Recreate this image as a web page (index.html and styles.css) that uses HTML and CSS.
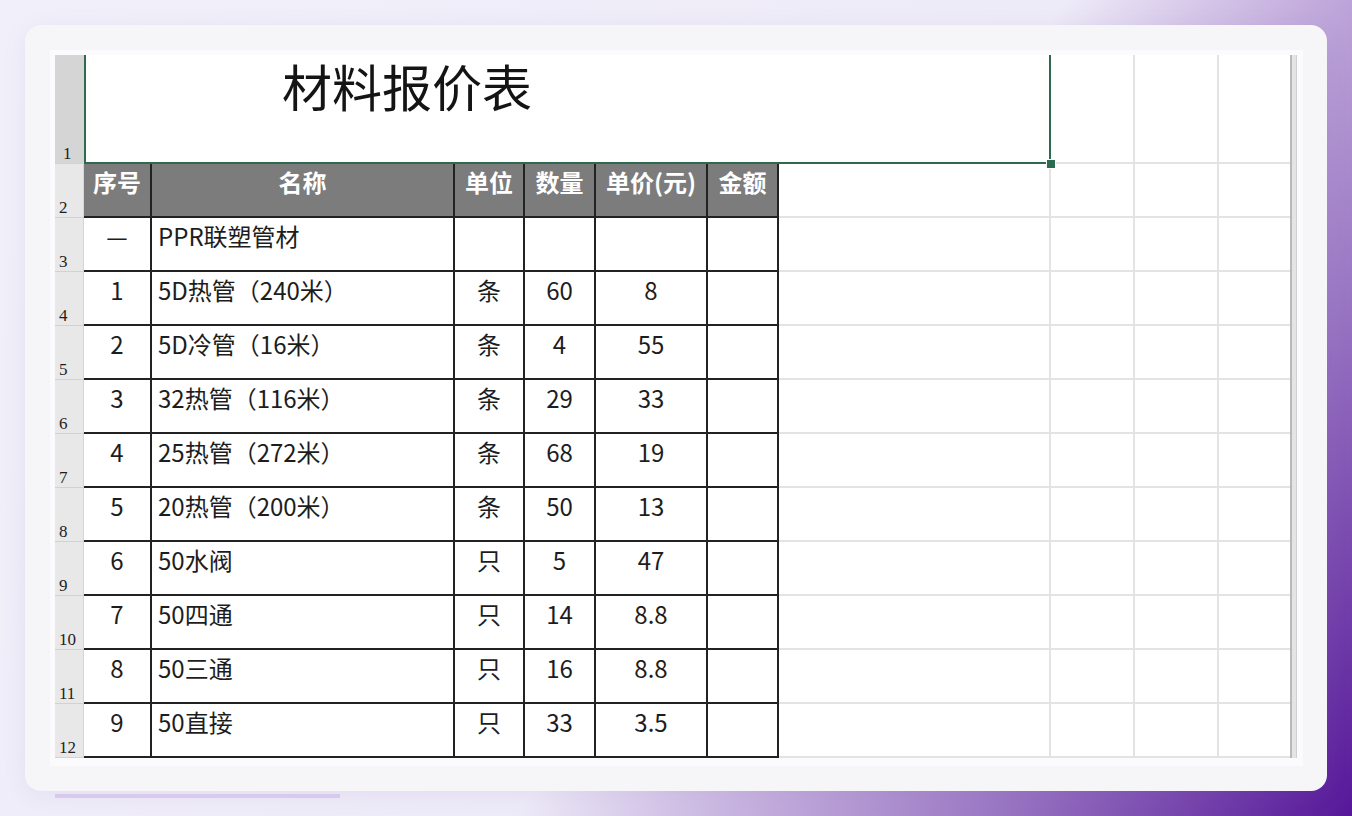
FILE: index.html
```html
<!DOCTYPE html>
<html lang="zh-CN">
<head>
<meta charset="utf-8">
<title>材料报价表</title>
<link rel="stylesheet" href="styles.css">
</head>
<body>
<div class="card">
  <div class="frame">
    <div class="sheet">
      <div class="rh rh-sel">1</div>
      <div class="title">材料报价表<span class="handle"></span></div>
      <div class="lc"></div><div class="lc"></div><div class="lc lc-last"></div>

      <div class="rh">2</div>
      <div class="th">序号</div><div class="th">名称</div><div class="th">单位</div><div class="th">数量</div><div class="th">单价(元)</div><div class="th">金额</div>
      <div class="lc"></div><div class="lc"></div><div class="lc"></div><div class="lc lc-last"></div>

      <div class="rh">3</div>
      <div class="td">—</div><div class="td name">PPR联塑管材</div><div class="td"></div><div class="td"></div><div class="td"></div><div class="td"></div>
      <div class="lc"></div><div class="lc"></div><div class="lc"></div><div class="lc lc-last"></div>

      <div class="rh">4</div>
      <div class="td">1</div><div class="td name">5D热管（240米）</div><div class="td">条</div><div class="td">60</div><div class="td">8</div><div class="td"></div>
      <div class="lc"></div><div class="lc"></div><div class="lc"></div><div class="lc lc-last"></div>

      <div class="rh">5</div>
      <div class="td">2</div><div class="td name">5D冷管（16米）</div><div class="td">条</div><div class="td">4</div><div class="td">55</div><div class="td"></div>
      <div class="lc"></div><div class="lc"></div><div class="lc"></div><div class="lc lc-last"></div>

      <div class="rh">6</div>
      <div class="td">3</div><div class="td name">32热管（116米）</div><div class="td">条</div><div class="td">29</div><div class="td">33</div><div class="td"></div>
      <div class="lc"></div><div class="lc"></div><div class="lc"></div><div class="lc lc-last"></div>

      <div class="rh">7</div>
      <div class="td">4</div><div class="td name">25热管（272米）</div><div class="td">条</div><div class="td">68</div><div class="td">19</div><div class="td"></div>
      <div class="lc"></div><div class="lc"></div><div class="lc"></div><div class="lc lc-last"></div>

      <div class="rh">8</div>
      <div class="td">5</div><div class="td name">20热管（200米）</div><div class="td">条</div><div class="td">50</div><div class="td">13</div><div class="td"></div>
      <div class="lc"></div><div class="lc"></div><div class="lc"></div><div class="lc lc-last"></div>

      <div class="rh">9</div>
      <div class="td">6</div><div class="td name">50水阀</div><div class="td">只</div><div class="td">5</div><div class="td">47</div><div class="td"></div>
      <div class="lc"></div><div class="lc"></div><div class="lc"></div><div class="lc lc-last"></div>

      <div class="rh">10</div>
      <div class="td">7</div><div class="td name">50四通</div><div class="td">只</div><div class="td">14</div><div class="td">8.8</div><div class="td"></div>
      <div class="lc"></div><div class="lc"></div><div class="lc"></div><div class="lc lc-last"></div>

      <div class="rh">11</div>
      <div class="td">8</div><div class="td name">50三通</div><div class="td">只</div><div class="td">16</div><div class="td">8.8</div><div class="td"></div>
      <div class="lc"></div><div class="lc"></div><div class="lc"></div><div class="lc lc-last"></div>

      <div class="rh">12</div>
      <div class="td">9</div><div class="td name">50直接</div><div class="td">只</div><div class="td">33</div><div class="td">3.5</div><div class="td"></div>
      <div class="lc"></div><div class="lc"></div><div class="lc"></div><div class="lc lc-last"></div>
    </div>
    <div class="vscroll"></div>
  </div>
</div>
<div class="hbar"></div>
</body>
</html>
```

FILE: styles.css
```css
html, body {
  margin: 0;
  padding: 0;
}

body {
  width: 1352px;
  height: 816px;
  overflow: hidden;
  box-sizing: border-box;
  padding: 25px 25px 0 25px;
  font-family: "Noto Sans CJK SC", "Noto Sans", sans-serif;
  background: linear-gradient(124deg,
    #f1f0fa 0%,
    #eeebf8 56%,
    #d3c3e7 64%,
    #b99fd6 72%,
    #9b78c4 81%,
    #7746ad 91%,
    #561799 100%);
}

.card {
  width: 1302px;
  height: 766px;
  box-sizing: border-box;
  padding: 25px 24px 26px 25px;
  background: #f6f6f9;
  border-radius: 16px;
  box-shadow: 0 4px 24px rgba(90, 70, 150, 0.08);
}

.frame {
  display: flex;
  background: #fbfbfd;
  padding: 5px 6px 8px 5px;
}

.sheet {
  display: grid;
  grid-template-columns: 29px 68px 303px 70px 71px 112px 71px 272px 84px 84px 71px;
  grid-template-rows: 109px repeat(11, 54px);
  background: #ffffff;
  color: #1d1d1d;
}

.sheet > div {
  box-sizing: border-box;
}

/* row headers */
.rh {
  background: #e8e8e8;
  border-bottom: 1px solid #d2d2d2;
  border-right: 1px solid #d6d6d6;
  font-family: "Liberation Serif", "DejaVu Serif", serif;
  font-size: 17px;
  color: #1e1e1e;
  display: flex;
  align-items: flex-end;
  padding: 0 0 1px 4px;
  line-height: 1;
}

.rh-sel {
  background: #d5d5d5;
  padding-left: 8px;
}

/* merged title cell */
.title {
  grid-column: 2 / span 7;
  position: relative;
  border-left: 2px solid #2d6a50;
  border-right: 2px solid #2d6a50;
  border-bottom: 2px solid #2d6a50;
  font-size: 50px;
  line-height: 1;
  font-weight: 400;
  color: #141414;
  padding: 5px 0 0 196px;
}

.handle {
  position: absolute;
  right: -6px;
  bottom: -6px;
  width: 8px;
  height: 8px;
  background: #2d6a50;
  box-shadow: 0 0 0 1px #ffffff;
}

/* table header */
.th {
  background: #7c7c7c;
  color: #ffffff;
  font-weight: 700;
  font-size: 24px;
  line-height: 30px;
  text-align: center;
  padding-top: 3px;
  border-right: 2px solid #222;
  border-bottom: 2px solid #222;
  white-space: nowrap;
}

/* data cells */
.td {
  font-size: 24px;
  line-height: 30px;
  text-align: center;
  padding-top: 3px;
  border-right: 2px solid #222;
  border-bottom: 2px solid #222;
  white-space: nowrap;
}

.td.name {
  text-align: left;
  padding-left: 6px;
}

/* light grid cells */
.lc {
  border-right: 2px solid #e3e3e3;
  border-bottom: 2px solid #e3e3e3;
}

.lc-last {
  border-right: none;
}

.vscroll {
  width: 7px;
  box-sizing: border-box;
  background: #e4e4e4;
  border-left: 2px solid #b9b9b9;
  border-right: 1px solid #d0d0d0;
}

.hbar {
  width: 285px;
  height: 4px;
  margin: 3px 0 0 30px;
  background: #d8c9ee;
}
```
